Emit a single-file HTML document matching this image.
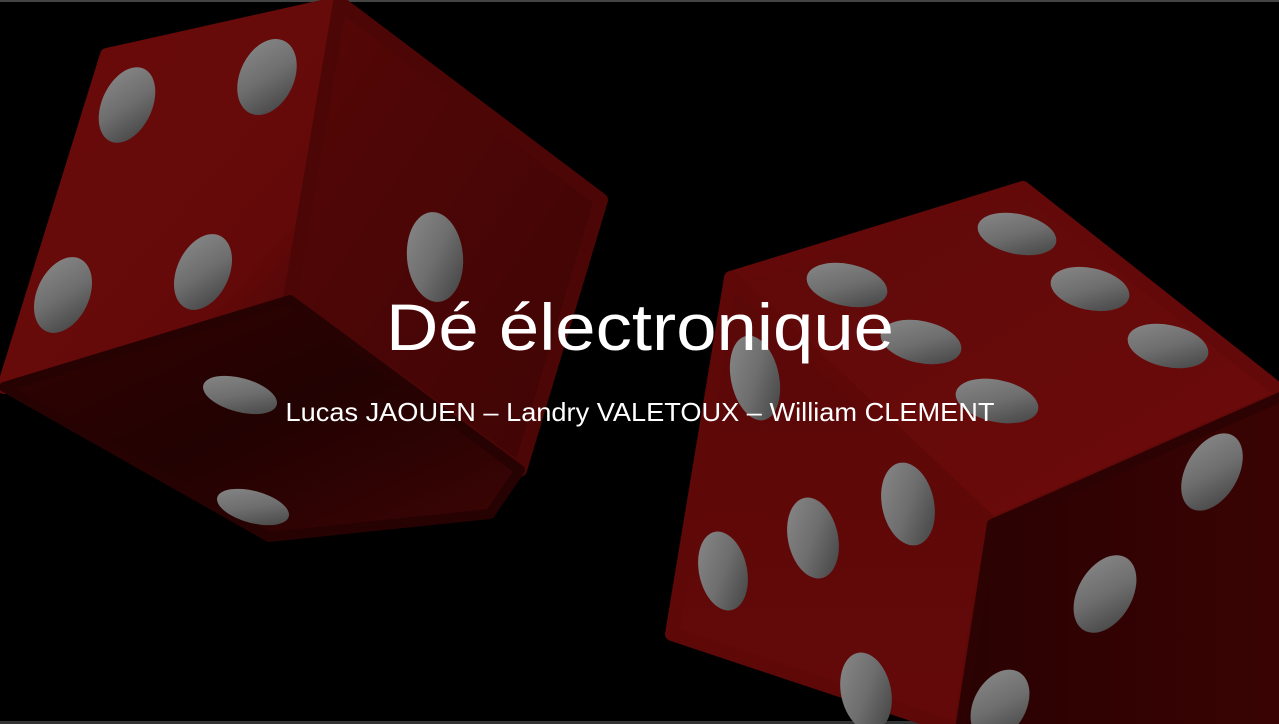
<!DOCTYPE html>
<html><head><meta charset="utf-8"><style>
html,body{margin:0;padding:0;background:#000;width:1279px;height:724px;overflow:hidden}
svg{display:block}
</style></head><body>
<svg width="1279" height="724" viewBox="0 0 1279 724" xmlns="http://www.w3.org/2000/svg">
<defs>
<linearGradient id="pip" x1="0" y1="0" x2="1" y2="1">
<stop offset="0" stop-color="#8a8a8a"/><stop offset="0.5" stop-color="#6e6e6e"/><stop offset="1" stop-color="#3e3e3e"/>
</linearGradient>
<linearGradient id="lf" x1="0" y1="0" x2="1" y2="1">
<stop offset="0" stop-color="#6a0b0b"/><stop offset="0.7" stop-color="#640909"/><stop offset="1" stop-color="#3a0404"/>
</linearGradient>
<linearGradient id="rf" x1="0" y1="0" x2="1" y2="1">
<stop offset="0" stop-color="#560707"/><stop offset="1" stop-color="#3e0404"/>
</linearGradient>
<linearGradient id="bf" x1="0" y1="0" x2="1" y2="1">
<stop offset="0" stop-color="#330303"/><stop offset="0.5" stop-color="#220202"/><stop offset="1" stop-color="#3d0404"/>
</linearGradient>
<linearGradient id="tf" x1="0" y1="0" x2="1" y2="1">
<stop offset="0" stop-color="#5e0909"/><stop offset="1" stop-color="#6e0b0b"/>
</linearGradient>
<linearGradient id="ff" x1="0" y1="0" x2="0" y2="1">
<stop offset="0" stop-color="#5a0808"/><stop offset="1" stop-color="#640909"/>
</linearGradient>
<linearGradient id="sf" x1="0" y1="0" x2="1" y2="0">
<stop offset="0" stop-color="#2a0202"/><stop offset="1" stop-color="#3a0303"/>
</linearGradient>
</defs>
<rect width="1279" height="724" fill="#000"/>
<rect width="1279" height="2" fill="#444"/>
<rect y="721" width="1279" height="3" fill="#333"/>

<!-- left die -->
<g stroke-linejoin="round">
<polygon points="107,55 340,3 290,300 4,387" fill="url(#lf)" stroke="url(#lf)" stroke-width="14"/>
<polygon points="340,3 601,200 520,470 290,300" fill="url(#rf)" stroke="#4c0606" stroke-width="14"/>
<polygon points="4,387 290,300 520,470 490,514 269,537" fill="url(#bf)" stroke="#260202" stroke-width="10"/>
</g>
<g fill="url(#pip)">
<ellipse cx="127" cy="105" rx="25" ry="40" transform="rotate(25 127 105)"/>
<ellipse cx="267" cy="77" rx="27" ry="40" transform="rotate(25 267 77)"/>
<ellipse cx="63" cy="295" rx="26" ry="40" transform="rotate(25 63 295)"/>
<ellipse cx="203" cy="272" rx="26" ry="40" transform="rotate(25 203 272)"/>
<ellipse cx="435" cy="257" rx="28" ry="45" transform="rotate(-5 435 257)"/>
<ellipse cx="240" cy="395" rx="38" ry="17" transform="rotate(15 240 395)"/>
<ellipse cx="253" cy="507" rx="37" ry="16" transform="rotate(15 253 507)"/>
</g>

<!-- right die -->
<g stroke-linejoin="round">
<polygon points="731,278 1023,188 1285,395 992,524" fill="url(#tf)" stroke="#640909" stroke-width="14"/>
<polygon points="731,278 992,524 960,730 672,634" fill="url(#ff)" stroke="#5e0808" stroke-width="14"/>
<polygon points="992,524 1285,395 1285,730 960,730" fill="url(#sf)" stroke="#2c0202" stroke-width="10"/>
</g>
<g fill="url(#pip)">
<ellipse cx="847" cy="285" rx="41" ry="21" transform="rotate(12 847 285)"/>
<ellipse cx="1017" cy="234" rx="40" ry="20" transform="rotate(12 1017 234)"/>
<ellipse cx="921" cy="342" rx="41" ry="21" transform="rotate(12 921 342)"/>
<ellipse cx="1090" cy="289" rx="40" ry="21" transform="rotate(12 1090 289)"/>
<ellipse cx="997" cy="401" rx="42" ry="21" transform="rotate(12 997 401)"/>
<ellipse cx="1168" cy="346" rx="41" ry="21" transform="rotate(12 1168 346)"/>
<ellipse cx="755" cy="378" rx="24" ry="43" transform="rotate(-12 755 378)"/>
<ellipse cx="723" cy="571" rx="24" ry="40" transform="rotate(-12 723 571)"/>
<ellipse cx="813" cy="538" rx="25" ry="41" transform="rotate(-12 813 538)"/>
<ellipse cx="908" cy="504" rx="26" ry="42" transform="rotate(-12 908 504)"/>
<ellipse cx="866" cy="692" rx="25" ry="40" transform="rotate(-12 866 692)"/>
<ellipse cx="1212" cy="472" rx="26" ry="42" transform="rotate(30 1212 472)"/>
<ellipse cx="1105" cy="594" rx="27" ry="42" transform="rotate(30 1105 594)"/>
<ellipse cx="1000" cy="705" rx="26" ry="38" transform="rotate(30 1000 705)"/>
</g>

<text x="640" y="350" text-anchor="middle" fill="#fff" font-family="Liberation Sans, sans-serif" font-size="66" font-weight="300" textLength="508" lengthAdjust="spacingAndGlyphs">Dé électronique</text>
<text x="640" y="421" text-anchor="middle" fill="#fff" font-family="Liberation Sans, sans-serif" font-size="26" textLength="709" lengthAdjust="spacingAndGlyphs">Lucas JAOUEN – Landry VALETOUX – William CLEMENT</text>
</svg>
</body></html>
